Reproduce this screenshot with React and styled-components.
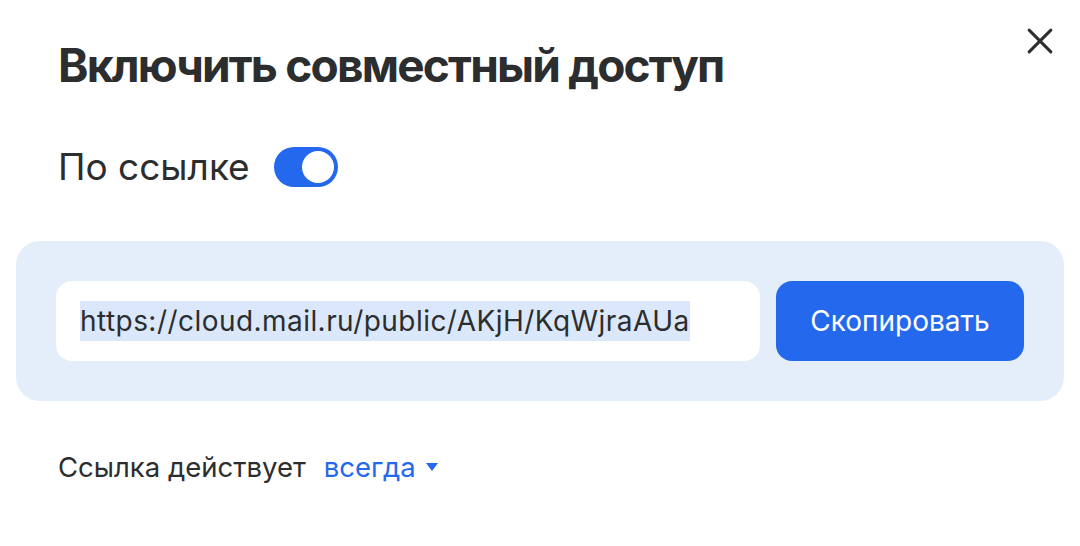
import React, { useState } from 'react'
import styled, { createGlobalStyle } from 'styled-components'

const Global = createGlobalStyle`
html, body {
  margin: 0;
  padding: 0;
  background: #ffffff;
}
body {
  font-family: Inter, "Noto Sans", sans-serif;
  color: #2c2d2e;
}
::selection {
  background: #dbe8fb;
}
`

const Dialog = styled.div`
width: 1080px;
height: 546px;
box-sizing: border-box;
padding: 0 16px;
display: flex;
flex-direction: column;
`

const Header = styled.div`
display: flex;
justify-content: space-between;
align-items: flex-start;
padding: 37px 0 0 42px;
`

const Title = styled.h1`
margin: 0;
font-size: 46px;
line-height: 56px;
font-weight: 700;
letter-spacing: -1.8px;
color: #2c2d2e;
`

const Close = styled.button`
width: 40px;
height: 40px;
margin-top: -16px;
margin-right: 4px;
padding: 0;
border: none;
background: none;
display: flex;
align-items: center;
justify-content: center;
cursor: pointer;
color: #2c2d2e;
`

const Row = styled.div`
display: flex;
align-items: center;
gap: ${p => p.$gap || 24}px;
padding-left: 42px;
margin-top: ${p => p.$top || 0}px;
`

const Label = styled.span`
font-size: 37px;
line-height: 44px;
color: #2c2d2e;
`

const Switch = styled.button`
width: 64px;
height: 40px;
border-radius: 20px;
border: none;
padding: 4px;
background: ${p => (p.$on ? '#2468ee' : '#c7cbd1')};
display: flex;
justify-content: ${p => (p.$on ? 'flex-end' : 'flex-start')};
cursor: pointer;
`

const Knob = styled.span`
width: 32px;
height: 32px;
border-radius: 50%;
background: #ffffff;
`

const Panel = styled.div`
margin-top: 52px;
height: 160px;
box-sizing: border-box;
border-radius: 24px;
background: #e4eefb;
padding: 40px;
display: flex;
gap: 16px;
`

const LinkField = styled.div`
flex: 1;
height: 80px;
border-radius: 16px;
background: #ffffff;
display: flex;
align-items: center;
padding: 0 24px;
font-size: 28px;
letter-spacing: 0.45px;
color: #2c2d2e;
`

const Selected = styled.span`
background: #dbe8fb;
line-height: 40px;
`

const CopyButton = styled.button`
width: 248px;
height: 80px;
border: none;
border-radius: 16px;
background: #2468ee;
color: #ffffff;
font-family: inherit;
font-size: 28px;
cursor: pointer;
`

const Note = styled.span`
font-size: 27.5px;
line-height: 32px;
color: #2c2d2e;
`

const Period = styled.button`
border: none;
background: none;
padding: 0;
display: flex;
align-items: center;
gap: 10px;
font-family: inherit;
font-size: 27.5px;
line-height: 32px;
color: #2468ee;
cursor: pointer;
`

export default function App() {
  const [on, setOn] = useState(true)

  return (
    <>
      <Global />
      <Dialog>
        <Header>
          <Title>Включить совместный доступ</Title>
          <Close aria-label="Закрыть">
            <svg width="26" height="26" viewBox="0 0 24 24" fill="none" stroke="currentColor" strokeWidth="2.8" strokeLinecap="round">
              <path d="M2 2L22 22M22 2L2 22" />
            </svg>
          </Close>
        </Header>
        <Row $top={52}>
          <Label>По ссылке</Label>
          <Switch $on={on} onClick={() => setOn(!on)}>
            <Knob />
          </Switch>
        </Row>
        <Panel>
          <LinkField>
            <Selected>https://cloud.mail.ru/public/AKjH/KqWjraAUa</Selected>
          </LinkField>
          <CopyButton>Скопировать</CopyButton>
        </Panel>
        <Row $top={50} $gap={18}>
          <Note>Ссылка действует</Note>
          <Period>
            всегда
            <svg width="12" height="8" viewBox="0 0 12 8">
              <path d="M0 0H12L6 8Z" fill="currentColor" />
            </svg>
          </Period>
        </Row>
      </Dialog>
    </>
  )
}
